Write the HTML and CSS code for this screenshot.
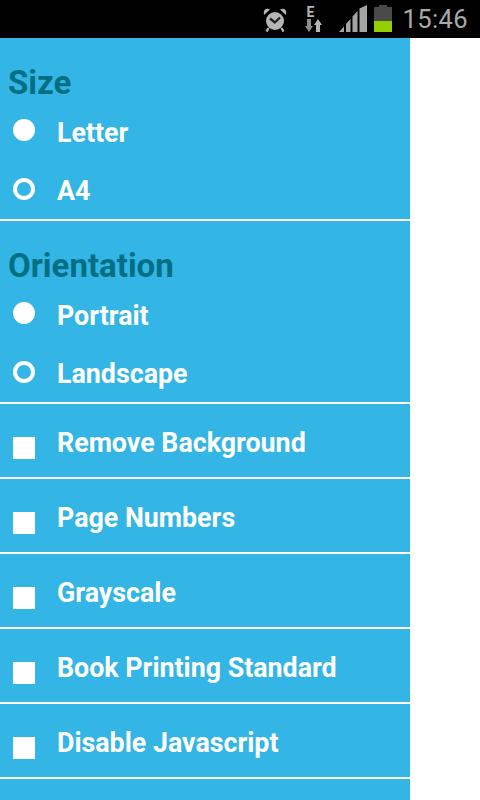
FILE: index.html
```html
<!DOCTYPE html>
<html lang='en'>

<head>
    <meta charset='UTF-8'>
    <meta name='viewport' content='width=device-width, initial-scale=1.0'>
    <title>Print Options</title>
    <link rel="stylesheet" href="styles.css">
</head>

<body>
    <div class='status-bar'>
        <svg class='icon-alarm' width='24' height='24' viewBox='0 0 24 24'>
            <path d='M1 7 L7 1.5 Q3.5 0 1.5 2 Q0 4 1 7 Z M23 7 L17 1.5 Q20.5 0 22.5 2 Q24 4 23 7 Z' fill='#b5b5b5' />
            <circle cx='12' cy='13' r='9' fill='#b5b5b5' />
            <path d='M7 10.5 L11.8 14.5 L17 9.5' fill='none' stroke='#222' stroke-width='2.4' />
            <path d='M5.5 20 L3.5 23.5 M18.5 20 L20.5 23.5' stroke='#b5b5b5' stroke-width='2.4' />
        </svg>
        <div class='network'>
            <span class='network-e'>E</span>
            <svg class='network-arrows' width='17' height='13' viewBox='0 0 17 13'>
                <path d='M2 0 H6 V7 H8 L4 13 L0 7 H2 Z' fill='#8c8c8c' />
                <path d='M11 13 V6 H9 L13 0 L17 6 H15 V13 Z' fill='#b5b5b5' />
            </svg>
        </div>
        <svg class='icon-signal' width='28' height='27' viewBox='0 0 28 27'>
            <path d='M0 27 L5 21.5 V27 Z M7 27 V19 L11.5 14 V27 Z M13.5 27 V11.5 L18.5 6 V27 Z M20.5 27 V3.5 L28 0 V27 Z' fill='#a4a4a4' />
        </svg>
        <div class='battery'>
            <div class='battery-cap'></div>
            <div class='battery-body'>
                <div class='battery-level'></div>
            </div>
        </div>
        <span class='clock'>15:46</span>
    </div>

    <div class='page'>
        <div class='panel'>
            <div class='group'>
                <h2>Size</h2>
                <div class='option'><span class='radio'></span><span class='label'>Letter</span></div>
                <div class='option'><span class='radio radio-on'></span><span class='label'>A4</span></div>
            </div>
            <div class='group'>
                <h2>Orientation</h2>
                <div class='option'><span class='radio'></span><span class='label'>Portrait</span></div>
                <div class='option'><span class='radio radio-on'></span><span class='label'>Landscape</span></div>
            </div>
            <div class='check-row'><span class='check'></span><span class='label'>Remove Background</span></div>
            <div class='check-row'><span class='check'></span><span class='label'>Page Numbers</span></div>
            <div class='check-row'><span class='check'></span><span class='label'>Grayscale</span></div>
            <div class='check-row'><span class='check'></span><span class='label'>Book Printing Standard</span></div>
            <div class='check-row'><span class='check'></span><span class='label'>Disable Javascript</span></div>
        </div>
    </div>
</body>

</html>
```

FILE: styles.css
```css
html,
body {
    margin: 0;
    padding: 0;
    height: 800px;
    overflow: hidden;
    background-color: #fff;
}

body {
    font-family: Roboto, sans-serif;
}

.status-bar {
    height: 38px;
    background-color: #000;
    display: flex;
    align-items: flex-start;
    justify-content: flex-end;
    padding-right: 12px;
    box-sizing: border-box;
}

.icon-alarm {
    margin: 8px 18px 0 0;
}

.network {
    width: 17px;
    margin: 6px 17px 0 0;
    display: flex;
    flex-direction: column;
    align-items: flex-start;
}

.network-e {
    color: #b5b5b5;
    font-size: 14px;
    font-weight: 700;
    line-height: 12px;
    margin-left: 1px;
}

.network-arrows {
    margin-top: 1px;
}

.icon-signal {
    margin: 5px 7px 0 0;
}

.battery {
    width: 18px;
    margin: 5px 10px 0 0;
    display: flex;
    flex-direction: column;
    align-items: center;
}

.battery-cap {
    width: 8px;
    height: 2px;
    background-color: #4a4a4a;
}

.battery-body {
    width: 18px;
    height: 25px;
    background-color: #4a4a4a;
    display: flex;
    align-items: flex-end;
}

.battery-level {
    width: 100%;
    height: 11px;
    background-color: #94cf00;
}

.clock {
    color: #a9a9a9;
    font-size: 25.5px;
    line-height: 38px;
    letter-spacing: 0.4px;
}

.page {
    height: 762px;
}

.panel {
    width: 410px;
    height: 100%;
    background-color: #33b5e5;
}

.group {
    height: 181px;
    border-bottom: 2px solid #fff;
    display: flex;
    flex-direction: column;
}

h2 {
    margin: 26px 0 0 8px;
    font-size: 33px;
    line-height: 37px;
    font-weight: 700;
    color: #006f84;
}

.option {
    height: 58px;
    display: flex;
    align-items: center;
}

.radio {
    width: 22px;
    height: 22px;
    margin: 0 22px 0 13px;
    box-sizing: border-box;
    border-radius: 50%;
    background-color: #fff;
}

.radio-on {
    background-color: #33b5e5;
    border: 4px solid #fff;
    margin-top: 2px;
}

.label {
    font-size: 26.8px;
    font-weight: 700;
    color: #fff;
    margin-top: 5px;
}

.check-row {
    height: 73px;
    border-bottom: 2px solid #fff;
    display: flex;
    align-items: center;
}

.check {
    width: 22px;
    height: 22px;
    margin: 15px 22px 0 13px;
    background-color: #fff;
}
```
